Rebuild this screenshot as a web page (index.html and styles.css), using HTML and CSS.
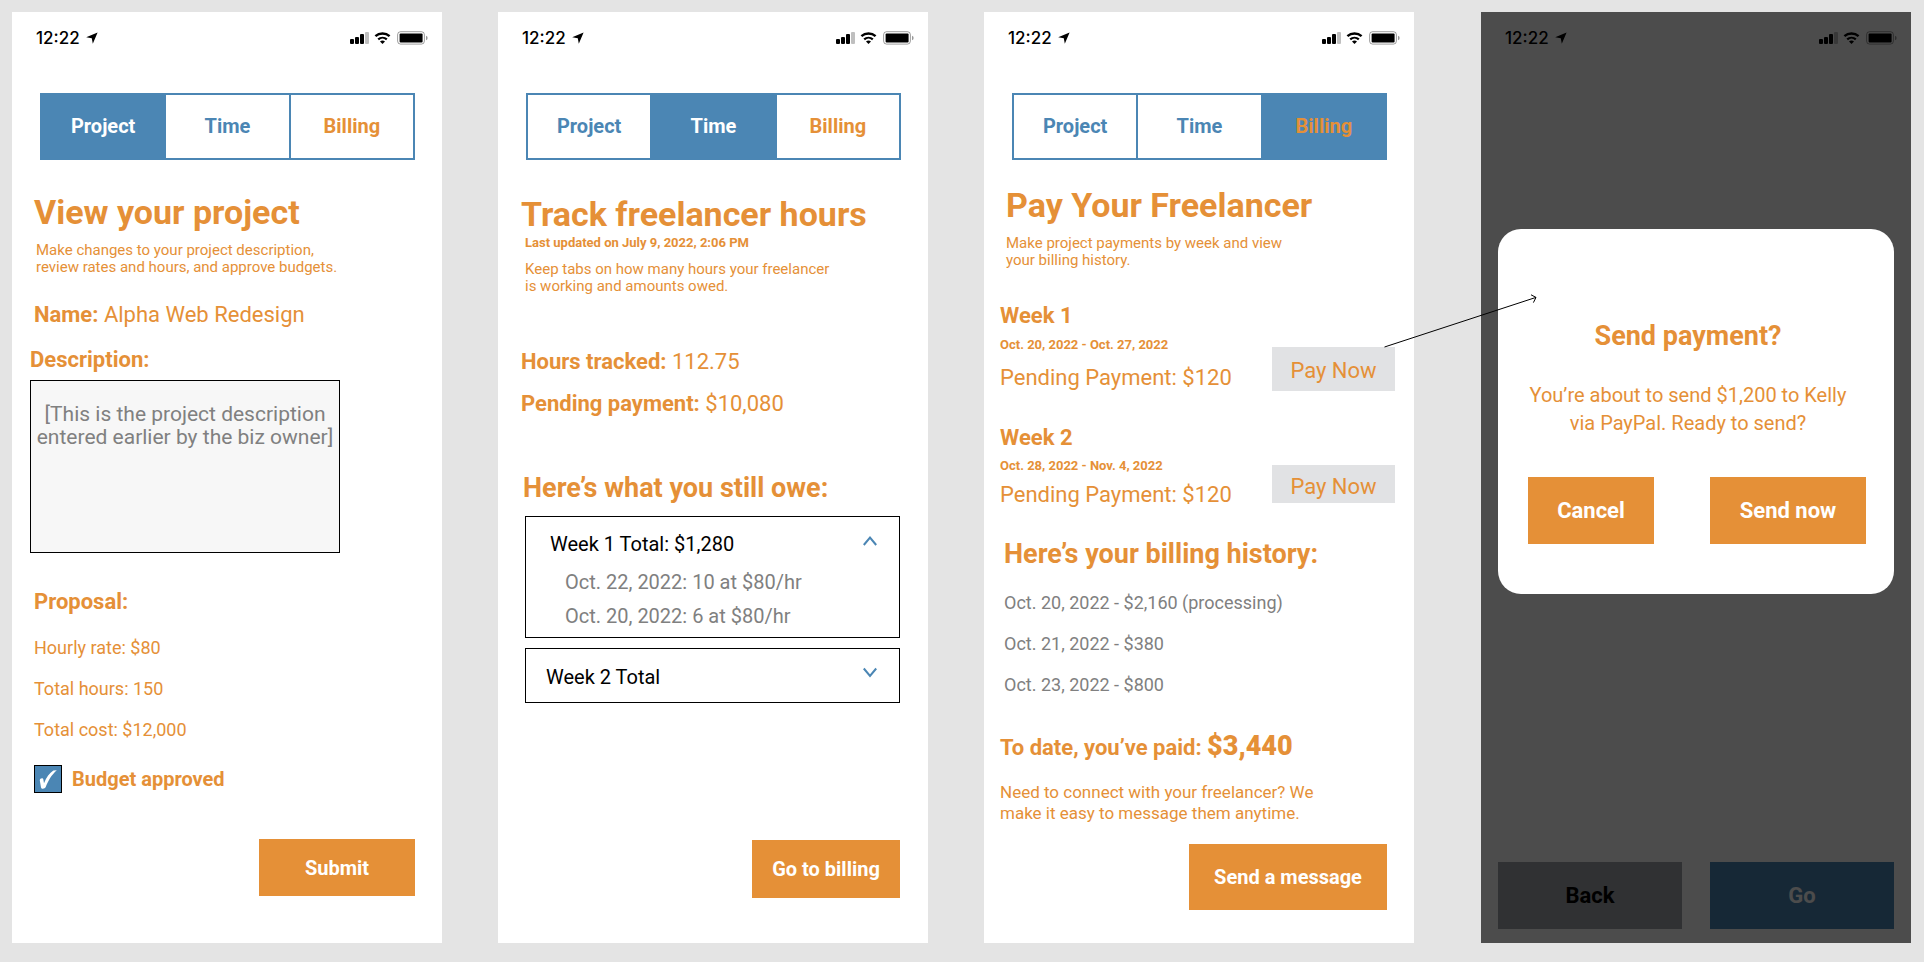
FILE: index.html
```
<!DOCTYPE html>
<html lang="en">
<head>
	<meta charset="utf-8">
	<meta name="viewport" content="width=device-width, initial-scale=1">
	<title>Freelancer billing</title>
	<link rel="stylesheet" href="styles.css">
</head>
<body>
	<!-- shared icons -->
	<svg class="sprite" aria-hidden="true">
		<symbol id="location" viewBox="0 0 12 12">
			<path d="M11.6 .4 L.2 5.2 L5.8 6.2 L6.8 11.8 Z"/>
		</symbol>
		<symbol id="status" viewBox="0 0 78 14">
			<rect x="0" y="8" width="4" height="5" rx="1"/>
			<rect x="5" y="6" width="4" height="7" rx="1"/>
			<rect x="10" y="3" width="4" height="10" rx="1"/>
			<rect x="15" y="1" width="4" height="12" rx="1" opacity=".25"/>
			<path d="M25.4 5.2 A10.6 10.6 0 0 1 39.6 5.2" fill="none" stroke="#000" stroke-width="2.4"/>
			<path d="M28.2 8.4 A6.4 6.4 0 0 1 36.8 8.4" fill="none" stroke="#000" stroke-width="2.2"/>
			<path d="M32.5 12.9 L30 10.6 A3.8 3.8 0 0 1 35 10.6 Z"/>
			<rect x="47.6" y=".7" width="26.8" height="12.4" rx="3" fill="none" stroke="#000" opacity=".38"/>
			<rect x="49.6" y="2.6" width="23" height="8.8" rx="1"/>
			<path d="M76 4.8 A2.3 2.3 0 0 1 76 9.2 Z" opacity=".4"/>
		</symbol>
	</svg>

	<!-- Project -->
	<section class="screen project">
		<div class="status-bar">
			<span class="clock">12:22</span>
			<svg class="location"><use href="#location"/></svg>
			<svg class="status-icons"><use href="#status"/></svg>
		</div>
		<nav class="tabs">
			<a href="#" class="current">Project</a>
			<a href="#">Time</a>
			<a href="#" class="billing">Billing</a>
		</nav>
		<div class="content">
			<h1>View your project</h1>
			<p class="intro">Make changes to your project description,<br>review rates and hours, and approve budgets.</p>
			<p class="line"><b>Name:</b> Alpha Web Redesign</p>
			<div class="field">
				<label for="description">Description:</label>
				<textarea id="description">[This is the project description entered earlier by the biz owner]</textarea>
			</div>
			<h3>Proposal:</h3>
			<ul class="list">
				<li>Hourly rate: $80</li>
				<li>Total hours: 150</li>
				<li>Total cost: $12,000</li>
			</ul>
			<label class="approve">
				<input type="checkbox" checked>
				<svg class="tick" viewBox="0 0 28 28"><path d="M5.8 15.4 C5.6 13.2 8.9 12.4 9.3 14.2 L10 18.2 C12.4 12.4 15.5 8 19.4 5.6 L22.8 5.2 C17.5 10 14.5 15 11.7 22 C10.8 24 7.4 24.2 7 22.4 Z"/></svg>
				Budget approved
			</label>
			<button class="btn submit">Submit</button>
		</div>
	</section>

	<!-- Time -->
	<section class="screen time">
		<div class="status-bar">
			<span class="clock">12:22</span>
			<svg class="location"><use href="#location"/></svg>
			<svg class="status-icons"><use href="#status"/></svg>
		</div>
		<nav class="tabs">
			<a href="#">Project</a>
			<a href="#" class="current">Time</a>
			<a href="#" class="billing">Billing</a>
		</nav>
		<div class="content">
			<h1>Track freelancer hours</h1>
			<p class="updated">Last updated on July 9, 2022, 2:06 PM</p>
			<p class="intro">Keep tabs on how many hours your freelancer<br>is working and amounts owed.</p>
			<div class="totals">
				<p class="line"><b>Hours tracked:</b> 112.75</p>
				<p class="line"><b>Pending payment:</b> $10,080</p>
			</div>
			<h2>Here’s what you still owe:</h2>
			<details class="week" open>
				<summary>Week 1 Total: $1,280
					<svg class="chevron" viewBox="0 0 16 16"><path d="M1.8 13 L8 5.6 L14.2 13"/></svg>
				</summary>
				<ul>
					<li>Oct. 22, 2022: 10 at $80/hr</li>
					<li>Oct. 20, 2022: 6 at $80/hr</li>
				</ul>
			</details>
			<details class="week">
				<summary>Week 2 Total
					<svg class="chevron" viewBox="0 0 16 16"><path d="M1.8 3.5 L8 10.9 L14.2 3.5"/></svg>
				</summary>
			</details>
			<button class="btn to-billing">Go to billing</button>
		</div>
	</section>

	<!-- Billing -->
	<section class="screen pay">
		<div class="status-bar">
			<span class="clock">12:22</span>
			<svg class="location"><use href="#location"/></svg>
			<svg class="status-icons"><use href="#status"/></svg>
		</div>
		<nav class="tabs">
			<a href="#">Project</a>
			<a href="#">Time</a>
			<a href="#" class="current billing">Billing</a>
		</nav>
		<div class="content">
			<h1>Pay Your Freelancer</h1>
			<p class="intro">Make project payments by week and view<br>your billing history.</p>
			<div class="payment">
				<div>
					<h3>Week 1</h3>
					<p class="dates">Oct. 20, 2022 - Oct. 27, 2022</p>
					<p class="pending">Pending Payment: $120</p>
				</div>
				<button class="pay-now">Pay Now</button>
			</div>
			<div class="payment compact">
				<div>
					<h3>Week 2</h3>
					<p class="dates">Oct. 28, 2022 - Nov. 4, 2022</p>
					<p class="pending">Pending Payment: $120</p>
				</div>
				<button class="pay-now">Pay Now</button>
			</div>
			<div class="history">
				<h2>Here’s your billing history:</h2>
				<ul class="list">
					<li>Oct. 20, 2022 - $2,160 (processing)</li>
					<li>Oct. 21, 2022 - $380</li>
					<li>Oct. 23, 2022 - $800</li>
				</ul>
			</div>
			<p class="paid">To date, you’ve paid: <strong>$3,440</strong></p>
			<p class="help">Need to connect with your freelancer? We<br>make it easy to message them anytime.</p>
			<button class="btn message">Send a message</button>
		</div>
	</section>

	<!-- Send payment dialog -->
	<section class="screen confirm">
		<div class="status-bar">
			<span class="clock">12:22</span>
			<svg class="location"><use href="#location"/></svg>
			<svg class="status-icons"><use href="#status"/></svg>
		</div>
		<div class="footer">
			<button class="back">Back</button>
			<button class="go">Go</button>
		</div>
		<div class="overlay">
			<div class="dialog" role="dialog" aria-labelledby="send-title">
				<div class="dialog-text">
					<h2 id="send-title">Send payment?</h2>
					<p>You’re about to send $1,200 to Kelly<br>via PayPal. Ready to send?</p>
				</div>
				<div class="dialog-buttons">
					<button class="btn cancel">Cancel</button>
					<button class="btn send">Send now</button>
				</div>
			</div>
		</div>
		<svg class="arrow" viewBox="0 0 154 56"><path d="M.5 53 L152 3.4 M147 .8 L152 3.4 L149.4 8.6"/></svg>
	</section>
</body>
</html>
```
FILE: styles.css
```
*{
    box-sizing: border-box;
    margin: 0;
    padding: 0;
}

body{
    display: flex;
    gap: 56px;
    min-height: 100vh;
    padding: 12px 13px 19px 12px;
    background-color: #e4e4e4;
    color: #e59037;
    font-family: Roboto, "Liberation Sans", sans-serif;
}

ul{
    list-style: none;
}

a{
    text-decoration: none;
}

button{
    border: 0;
    font-family: inherit;
    cursor: pointer;
}

.sprite{
    position: absolute;
    width: 0;
    height: 0;
}

.screen{
    display: flex;
    flex: 1;
    flex-direction: column;
    min-width: 0;
    background-color: #fff;
}

/* status bar */
.status-bar{
    display: flex;
    align-items: center;
    height: 52px;
    padding: 0 14px 0 24px;
    color: #000;
}

.clock{
    font: 500 17px/20px Inter, sans-serif;
}

.location{
    width: 12px;
    height: 12px;
    margin-left: 6px;
}

.status-icons{
    width: 78px;
    height: 14px;
    margin-left: auto;
}

/* tabs */
.tabs{
    display: flex;
    height: 67px;
    margin: 29px 27px 0 28px;
    border: 2px solid #4b86b4;
}

.tabs a{
    flex: 1;
    color: #4b86b4;
    font-size: 20px;
    font-weight: 700;
    line-height: 63px;
    text-align: center;
}

.tabs a + a{
    border-left: 2px solid #4b86b4;
}

.tabs .current{
    background-color: #4b86b4;
    color: #fff;
}

.tabs .billing{
    color: #e59037;
}

/* text */
.content{
    display: flex;
    flex: 1;
    flex-direction: column;
}

h1{
    font-size: 34px;
    line-height: 40px;
}

h2{
    font-size: 27px;
    line-height: 30px;
}

h3, .line, .field label, .pending{
    font-size: 22px;
    line-height: 26px;
}

.intro{
    margin-top: 10px;
    padding-left: 2px;
    font-size: 15px;
    line-height: 17px;
}

.updated, .dates{
    font-size: 13px;
    font-weight: 700;
    line-height: 17px;
}

.list{
    display: flex;
    flex-direction: column;
    gap: 20px;
    font-size: 18px;
    line-height: 21px;
}

.btn{
    background-color: #e59037;
    color: #fff;
    font-size: 20px;
    font-weight: 700;
}

.content .btn{
    align-self: flex-end;
    margin-top: auto;
}

/* project */
.project .content{
    padding: 32px 27px 47px 22px;
}

.project .line{
    margin-top: 26px;
}

.field{
    display: flex;
    flex-direction: column;
    align-items: flex-start;
    margin: 19px 0 36px -4px;
}

.field label{
    font-weight: 700;
}

.field textarea{
    width: 310px;
    height: 173px;
    margin-top: 7px;
    padding: 22px 4px;
    border: 1px solid #000;
    background-color: #f7f7f7;
    color: #808080;
    font: 21px/23px Roboto, sans-serif;
    text-align: center;
    resize: none;
}

.project .list{
    margin: 22px 0 25px;
}

.approve{
    position: relative;
    display: flex;
    align-items: center;
    gap: 10px;
    font-size: 20px;
    font-weight: 700;
    line-height: 28px;
}

.approve input{
    width: 28px;
    height: 28px;
    border: 1px solid #000;
    background-color: #4b86b4;
    appearance: none;
}

.tick{
    position: absolute;
    top: 0;
    left: 0;
    width: 28px;
    height: 28px;
    fill: none;
    pointer-events: none;
}

.approve input:checked + .tick{
    fill: #fff;
}

.submit{
    width: 156px;
    height: 57px;
}

/* time */
.time .content{
    padding: 34px 28px 45px 23px;
}

.time .intro, .updated{
    padding-left: 4px;
}

.time h2{
    padding-left: 2px;
}

.totals{
    display: flex;
    flex-direction: column;
    gap: 16px;
    margin: 54px 0 56px;
}

.week{
    margin: 10px 0 0 4px;
    padding: 16px 21px 13px 20px;
    border: 1px solid #000;
    color: #000;
    font-size: 20px;
    line-height: 24px;
}

.week[open]{
    margin-top: 13px;
    padding: 15px 21px 9px 24px;
}

.week summary{
    display: flex;
    justify-content: space-between;
    cursor: pointer;
}

.week ul{
    display: flex;
    flex-direction: column;
    gap: 10px;
    margin-top: 14px;
    padding-left: 15px;
    color: #808080;
}

.chevron{
    width: 16px;
    height: 16px;
    fill: none;
    stroke: #4b86b4;
    stroke-width: 2;
}

.to-billing{
    width: 148px;
    height: 58px;
}

/* billing */
.pay .content{
    padding: 25px 27px 33px 16px;
}

.pay h1, .pay .intro{
    padding-left: 6px;
}

.payment{
    display: flex;
    align-items: flex-end;
    justify-content: space-between;
    margin: 34px -8px 0 0;
}

.dates{
    margin: 7px 0 12px;
}

.compact .dates{
    margin: 6px 0 8px;
}

.pay-now{
    width: 123px;
    padding: 11px 0 7px;
    background-color: #e1e2e4;
    color: #e59037;
    font-size: 22px;
    line-height: 26px;
}

.compact .pay-now{
    margin-bottom: 5px;
    padding: 9px 0 3px;
}

.history{
    margin: 31px 0 36px;
    padding-left: 4px;
}

.history .list{
    margin-top: 23px;
    color: #808080;
}

.paid{
    font-size: 22px;
    font-weight: 700;
    line-height: 30px;
}

.paid strong{
    font-size: 27px;
}

.help{
    margin-top: 19px;
    font-size: 17px;
    line-height: 21px;
}

.message{
    width: 198px;
    height: 66px;
}

/* confirm */
.confirm{
    position: relative;
    margin-left: 11px;
}

.footer{
    display: flex;
    gap: 28px;
    margin-top: auto;
    padding: 0 17px 14px;
}

.footer button{
    flex: 1;
    height: 67px;
    font-size: 22px;
    font-weight: 700;
}

.back{
    background-color: #a0a3aa;
    color: #000;
}

.go{
    background-color: #4b86b4;
    color: #fff;
}

.overlay{
    position: absolute;
    inset: 0;
    padding: 217px 17px 0;
    background-color: rgba(0, 0, 0, .7);
}

.dialog{
    padding: 92px 28px 50px 30px;
    border-radius: 23px;
    background-color: #fff;
}

.dialog-text{
    padding-right: 18px;
    text-align: center;
}

.dialog p{
    margin-top: 30px;
    font-size: 20px;
    line-height: 28px;
}

.dialog-buttons{
    display: flex;
    justify-content: space-between;
    margin-top: 40px;
}

.dialog-buttons .btn{
    height: 67px;
    font-size: 22px;
}

.cancel{
    width: 126px;
}

.send{
    width: 156px;
}

/* link from Pay Now to the dialog */
.arrow{
    position: absolute;
    top: 282px;
    left: -97px;
    width: 154px;
    height: 56px;
    fill: none;
    stroke: #000;
}
```
